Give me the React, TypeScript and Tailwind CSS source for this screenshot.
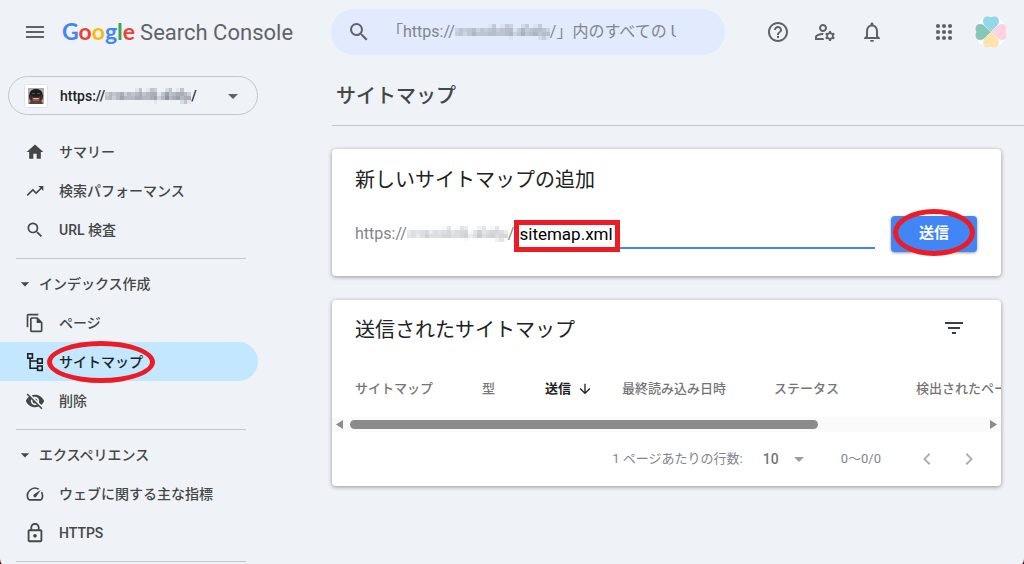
import { useState } from "react";
import type { ReactNode } from "react";
import {
  MdArrowDownward,
  MdArrowDropDown,
  MdChevronLeft,
  MdChevronRight,
  MdFilterList,
  MdHelpOutline,
  MdHome,
  MdLockOutline,
  MdMenu,
  MdNotificationsNone,
  MdOutlineFileCopy,
  MdOutlineManageAccounts,
  MdOutlineSpeed,
  MdSearch,
  MdTrendingUp,
  MdVisibilityOff,
} from "react-icons/md";

// opacity (0-9) of each cell of the masked domain
const MASK_ROWS = ["00000000140143002401400", "35456354564566147456653", "45357555665567358567566", "00000000000001000000241"];

const COLUMNS = ["サイトマップ", "型", "送信", "最終読み込み日時", "ステータス", "検出されたページ"];

export default function App() {
  return (
    <div className="min-h-screen bg-[#5c0f14]">
      <div className="min-h-screen overflow-hidden rounded-b-lg bg-[#eff3f8] font-[Roboto,'Noto_Sans_CJK_JP',sans-serif] text-[#444746]">
        <Header />
        <div className="flex">
          <Sidebar />
          <main className="min-w-0 flex-1">
            <h1 className="border-b border-[#c4c7c5] px-1 pt-[19px] pb-[15px] text-xl leading-7 font-medium">
              サイトマップ
            </h1>
            <div className="space-y-6 pt-[23px] pr-[23px]">
              <AddSitemap />
              <SubmittedSitemaps />
            </div>
          </main>
        </div>
      </div>
    </div>
  );
}

function Header() {
  return (
    <header className="flex h-[63px] items-center pr-[17px]">
      <div className="flex w-[331px] shrink-0 items-center gap-[15px] pl-[23px]">
        <button type="button" aria-label="メニュー">
          <MdMenu size={24} className="text-[#5f6368]" />
        </button>
        <a href="#home" className="flex items-baseline gap-[5px] whitespace-nowrap text-[#5f6368]">
          <span className="font-[Lato,sans-serif] text-[23px] font-bold">
            <span className="text-[#4285f4]">G</span>
            <span className="text-[#ea4335]">o</span>
            <span className="text-[#fbbc04]">o</span>
            <span className="text-[#4285f4]">g</span>
            <span className="text-[#34a853]">l</span>
            <span className="text-[#ea4335]">e</span>
          </span>
          <span className="text-[22px]">Search Console</span>
        </a>
      </div>

      <label className="relative flex h-[46px] w-[394px] items-center rounded-full bg-[#e1ebfd] pl-4 text-[#80868b]">
        <MdSearch size={24} className="shrink-0 text-[#5f6368]" />
        <span className="ml-4 flex w-[289px] items-center overflow-hidden text-base whitespace-nowrap">
          「https://
          <Mask className="h-4 w-[95px] opacity-70" />
          /」内のすべての URL を検査
        </span>
        <input type="text" aria-label="URL を検査" className="absolute inset-0 rounded-full bg-transparent px-14 outline-none" />
      </label>

      <div className="ml-auto flex items-center gap-[23px] text-[#5f6368]">
        <button type="button" aria-label="ヘルプ">
          <MdHelpOutline size={24} />
        </button>
        <button type="button" aria-label="ユーザー設定">
          <MdOutlineManageAccounts size={24} />
        </button>
        <button type="button" aria-label="通知">
          <MdNotificationsNone size={24} />
        </button>
        <button type="button" aria-label="アプリ" className="ml-[25px]">
          <AppsIcon />
        </button>
        <button type="button" aria-label="アカウント" className="-ml-1">
          <Clover />
        </button>
      </div>
    </header>
  );
}

function Sidebar() {
  return (
    <nav className="w-[332px] shrink-0">
      <button
        type="button"
        className="mt-[13px] mb-[17px] ml-2 flex h-[39px] w-[250px] items-center rounded-full border border-[#c4c7c5] pl-[15px] text-sm font-medium text-[#1f1f1f]"
      >
        <Favicon />
        <span className="ml-3">https://</span>
        <Mask className="h-4 w-[86px]" />/
        <MdArrowDropDown size={24} className="mr-3 ml-auto text-[#5f6368]" />
      </button>

      <NavItem icon={<MdHome size={20} />} label="サマリー" />
      <NavItem icon={<MdTrendingUp size={20} />} label="検索パフォーマンス" />
      <NavItem icon={<MdSearch size={20} />} label="URL 検査" />
      <Divider />
      <NavSection label="インデックス作成" />
      <NavItem icon={<MdOutlineFileCopy size={20} />} label="ページ" />
      <NavItem icon={<TreeIcon />} label="サイトマップ" active />
      <NavItem icon={<MdVisibilityOff size={20} />} label="削除" />
      <Divider />
      <NavSection label="エクスペリエンス" />
      <NavItem icon={<MdOutlineSpeed size={20} />} label="ウェブに関する主な指標" />
      <NavItem icon={<MdLockOutline size={22} />} label="HTTPS" />
      <Divider />
    </nav>
  );
}

function NavItem({ icon, label, active }: { icon: ReactNode; label: string; active?: boolean }) {
  return (
    <a
      href="#nav"
      className={`flex h-[39px] w-[258px] items-center rounded-r-full pl-[23px] text-sm font-medium ${
        active ? "bg-[#c2e7ff] text-[#1f1f1f]" : ""
      }`}
    >
      <span className="flex w-6 justify-center">{icon}</span>
      <span className="relative ml-3">
        {label}
        {active && <span className="absolute -inset-x-3 -inset-y-[11px] rounded-[50%] border-[5px] border-[#ed1c24]" />}
      </span>
    </a>
  );
}

function NavSection({ label }: { label: string }) {
  return (
    <button type="button" className="flex h-[39px] items-center gap-1 pl-[15px] text-sm font-medium">
      <MdArrowDropDown size={20} />
      {label}
    </button>
  );
}

function Divider() {
  return <hr className="mt-[9px] mb-[5px] ml-4 w-[230px] border-[#c4c7c5]" />;
}

function AddSitemap() {
  const [path, setPath] = useState("sitemap.xml");

  return (
    <section className="rounded-sm bg-white pt-[17px] pr-6 pb-6 pl-[23px] shadow-[0_1px_4px_rgba(0,0,0,0.4)]">
      <h2 className="text-xl leading-7 text-[#212121]">新しいサイトマップの追加</h2>
      <form className="mt-[22px] flex h-9 gap-4" onSubmit={(e) => e.preventDefault()}>
        <label htmlFor="sitemap-path" className="-mr-4 flex items-center text-base text-[#80868b]">
          https://
          <Mask className="h-4 w-[101px] opacity-50" />/
        </label>
        <div className="relative mb-[3px] flex-1 border-b-2 border-[#4285f4]">
          <input
            id="sitemap-path"
            type="text"
            value={path}
            onChange={(e) => setPath(e.target.value)}
            className="h-full w-full pt-1 pl-[5px] text-[17px] text-black outline-none"
          />
          <span className="pointer-events-none absolute top-1 left-0 h-8 w-[106px] border-5 border-[#ed1c24]" />
        </div>
        <button
          type="submit"
          className="relative w-[86px] rounded-sm bg-[#4285f4] pb-0.5 text-[15px] font-bold text-white shadow-[0_1px_3px_rgba(0,0,0,0.4)]"
        >
          送信
          <span className="absolute inset-x-0.5 -top-[7px] -bottom-1 rounded-[50%] border-[5px] border-[#ed1c24]" />
        </button>
      </form>
    </section>
  );
}

function SubmittedSitemaps() {
  return (
    <section className="rounded-sm bg-white pt-4 shadow-[0_1px_4px_rgba(0,0,0,0.4)]">
      <div className="flex items-start justify-between pr-[35px] pl-[23px]">
        <h2 className="text-xl leading-7 text-[#212121]">送信されたサイトマップ</h2>
        <button type="button" aria-label="フィルタ">
          <MdFilterList size={24} className="text-[#3c4043]" />
        </button>
      </div>

      <div className="mt-[17px] overflow-hidden">
        <table className="w-[904px] table-fixed text-left text-[13px] text-[#757575]">
          <colgroup>
            <col className="w-[150px]" />
            <col className="w-[63px]" />
            <col className="w-[77px]" />
            <col className="w-[152px]" />
            <col className="w-[142px]" />
            <col />
          </colgroup>
          <thead>
            <tr className="h-14">
              {COLUMNS.map((name) => (
                <th key={name} className="font-medium whitespace-nowrap first:pl-[23px]">
                  {name === "送信" ? (
                    <span className="flex items-center gap-1.5 font-bold text-[#212121]">
                      {name}
                      <MdArrowDownward size={16} />
                    </span>
                  ) : (
                    name
                  )}
                </th>
              ))}
            </tr>
          </thead>
        </table>
      </div>

      {/* スクロールバー */}
      <div className="flex h-[15px] items-center gap-[7px] bg-[#fafafa] px-1">
        <Arrow points="7,0 7,9 0,4.5" />
        <div className="flex-1">
          <div className="h-[9px] w-[74%] rounded-full bg-[#8b8b8b]" />
        </div>
        <Arrow points="0,0 0,9 7,4.5" />
      </div>

      <div className="flex h-[54px] items-center justify-end pr-5 text-[13px] text-[#80868b]">
        <label htmlFor="page-size">1 ページあたりの行数:</label>
        <div className="relative ml-5">
          <select id="page-size" className="w-[46px] appearance-none text-sm font-medium text-[#757575] outline-none">
            <option>10</option>
          </select>
          <MdArrowDropDown size={24} className="pointer-events-none absolute -top-0.5 -right-0.5 text-[#9e9e9e]" />
        </div>
        <span className="ml-8">0〜0/0</span>
        <button type="button" aria-label="前のページ" className="ml-[34px]">
          <MdChevronLeft size={24} className="text-[#b0b0b0]" />
        </button>
        <button type="button" aria-label="次のページ" className="ml-[18px]">
          <MdChevronRight size={24} className="text-[#b0b0b0]" />
        </button>
      </div>
    </section>
  );
}

function Arrow({ points }: { points: string }) {
  return (
    <svg width="7" height="9" viewBox="0 0 7 9" fill="#8b8b8b">
      <polygon points={points} />
    </svg>
  );
}

function Mask({ className }: { className: string }) {
  return (
    <svg viewBox="0 0 23 4" preserveAspectRatio="none" shapeRendering="crispEdges" fill="#858a96" className={`shrink-0 ${className}`}>
      {MASK_ROWS.map((row, y) =>
        row.split("").map((v, x) => <rect key={`${x}-${y}`} x={x} y={y} width="1" height="1" opacity={Number(v) / 9} />)
      )}
    </svg>
  );
}

function AppsIcon() {
  const dots = [6, 12, 18];
  return (
    <svg width="24" height="24" viewBox="0 0 24 24" fill="currentColor">
      {dots.map((y) => dots.map((x) => <circle key={`${x}-${y}`} cx={x} cy={y} r="2.1" />))}
    </svg>
  );
}

function TreeIcon() {
  return (
    <svg width="20" height="20" viewBox="0 0 20 20" fill="none" stroke="currentColor" strokeWidth="1.6">
      <rect x="2.8" y="1.8" width="4.6" height="4.4" />
      <rect x="12.6" y="6.8" width="4.6" height="4.4" />
      <rect x="12.6" y="14" width="4.6" height="4.4" />
      <path d="M5.1 6.2V16.2H12.6M5.1 9H12.6" />
    </svg>
  );
}

function Favicon() {
  return (
    <svg width="24" height="24" viewBox="0 0 24 24">
      <rect x="0.5" y="0.5" width="23" height="23" rx="2" fill="#fff" stroke="#e3e3e3" />
      <rect x="4" y="4" width="16" height="16" fill="#b3aaa2" />
      <circle cx="12" cy="12" r="7.2" fill="#3b2c2a" />
      <path d="M5 20l2-4h10l2 4z" fill="#5a4038" />
      <ellipse cx="12" cy="9" rx="6" ry="3.5" fill="#1d1c22" />
      <path d="M8 9.5h3M13 9.5h3" stroke="#4f5866" strokeWidth="1.2" />
      <path d="M8 13c2 2 6 2 8 0l-1 4H9z" fill="#a4564b" />
      <path d="M9.5 14.5h5" stroke="#d9c9bf" />
    </svg>
  );
}

function Clover() {
  const heart =
    "M16 16C13 12 8 9.5 8 5.2C8 2 10 0.5 12.5 0.5C14.4 0.5 15.4 0.8 16 1.6C16.6 0.8 17.6 0.5 19.5 0.5C22 0.5 24 2 24 5.2C24 9.5 19 12 16 16Z";
  return (
    <svg width="32" height="32" viewBox="0 0 32 32">
      <circle cx="16" cy="16" r="15.5" fill="#fff" />
      <path d={heart} fill="#93d7e9" />
      <path d={heart} fill="#ffd3e2" transform="rotate(90 16 16)" />
      <path d={heart} fill="#fde3ae" transform="rotate(180 16 16)" />
      <path d={heart} fill="#86c7b8" transform="rotate(270 16 16)" />
    </svg>
  );
}
